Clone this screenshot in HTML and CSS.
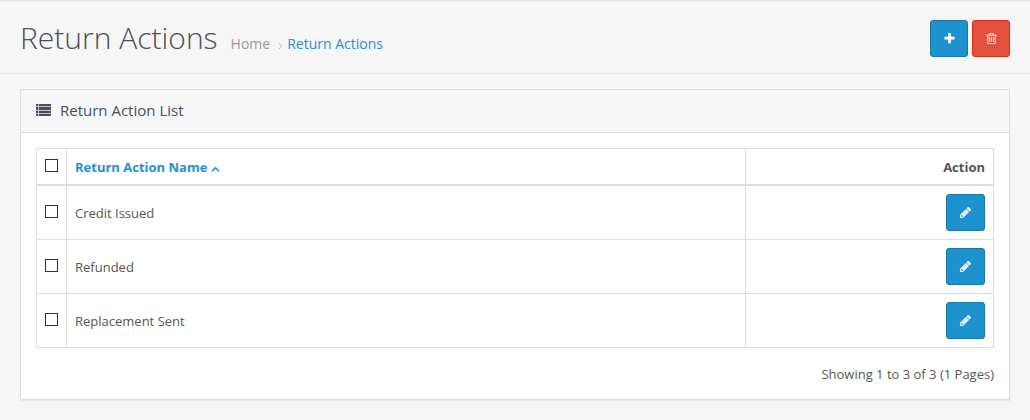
FILE: index.html
```html
<!DOCTYPE html>
<html lang="en">
<head>
<meta charset="utf-8">
<title>Return Actions</title>
<link rel="stylesheet" href="styles.css">
</head>
<body>
<svg class="sprite" aria-hidden="true">
  <symbol id="plus" viewBox="0 0 1792 1792"><path d="M1600 736v192q0 40-28 68t-68 28h-416v416q0 40-28 68t-68 28h-192q-40 0-68-28t-28-68v-416h-416q-40 0-68-28t-28-68v-192q0-40 28-68t68-28h416v-416q0-40 28-68t68-28h192q40 0 68 28t28 68v416h416q40 0 68 28t28 68z"/></symbol>
  <symbol id="trash" viewBox="0 0 1792 1792"><path d="M704 736v576q0 14-9 23t-23 9h-64q-14 0-23-9t-9-23v-576q0-14 9-23t23-9h64q14 0 23 9t9 23zm256 0v576q0 14-9 23t-23 9h-64q-14 0-23-9t-9-23v-576q0-14 9-23t23-9h64q14 0 23 9t9 23zm256 0v576q0 14-9 23t-23 9h-64q-14 0-23-9t-9-23v-576q0-14 9-23t23-9h64q14 0 23 9t9 23zm128 724v-948h-896v948q0 22 7 40.5t14.5 27 10.5 8.5h832q3 0 10.5-8.5t14.5-27 7-40.5zm-672-1076h448l-48-117q-7-9-17-11h-317q-10 2-17 11zm928 32v64q0 14-9 23t-23 9h-96v948q0 83-47 143.5t-113 60.5h-832q-66 0-113-58.5t-47-141.5v-952h-96q-14 0-23-9t-9-23v-64q0-14 9-23t23-9h309l70-167q15-37 54-63t79-26h320q40 0 79 26t54 63l70 167h309q14 0 23 9t9 23z"/></symbol>
  <symbol id="pencil" viewBox="0 0 1792 1792"><path d="M491 1536l91-91-235-235-91 91v107h128v128h107zm523-928q0-22-22-22-10 0-17 7l-542 542q-7 7-7 17 0 22 22 22 10 0 17-7l542-542q7-7 7-17zm-54-192l416 416-832 832h-416v-416zm683 96q0 53-37 90l-166 166-416-416 166-165q36-38 90-38 53 0 91 38l235 234q37 39 37 91z"/></symbol>
</svg>
<header class="page-header">
  <h1 class="page-title">Return Actions</h1>
  <nav class="breadcrumb" aria-label="Breadcrumb">
    <a class="crumb" href="#">Home</a>
    <svg class="crumb-sep" viewBox="0 0 5 8" aria-hidden="true"><path d="M1 2l3 3-3 3"/></svg>
    <a class="crumb crumb-active" href="#">Return Actions</a>
  </nav>
  <div class="toolbar">
    <button class="btn btn-primary" type="button" aria-label="Add New"><svg class="icon"><use href="#plus"/></svg></button>
    <button class="btn btn-danger" type="button" aria-label="Delete"><svg class="icon"><use href="#trash"/></svg></button>
  </div>
</header>
<main class="panel">
  <div class="panel-heading">
    <svg class="list-icon" viewBox="0 0 15 12" aria-hidden="true"><path d="M0 0h2v2H0zM3 0h12v2H3zM0 3h2v3H0zM3 3h12v3H3zM0 7h2v2H0zM3 7h12v2H3zM0 10h2v2H0zM3 10h12v2H3z"/><path class="list-soft" d="M0 0h15v12H0z"/></svg>
    <h2 class="panel-title">Return Action List</h2>
  </div>
  <div class="panel-body">
    <table class="table">
      <thead>
        <tr>
          <th class="col-check"><input class="check" type="checkbox" aria-label="Select all"></th>
          <th class="col-name"><a class="sort" href="#">Return Action Name<svg class="caret" viewBox="0 0 9 6" aria-hidden="true"><path d="M1 5.300L4.500 1.800 8 5.300"/></svg></a></th>
          <th class="col-action">Action</th>
        </tr>
      </thead>
      <tbody>
        <tr>
          <td><input class="check" type="checkbox" aria-label="Select Credit Issued"></td>
          <td>Credit Issued</td>
          <td class="col-action"><button class="btn btn-primary btn-edit" type="button" aria-label="Edit Credit Issued"><svg class="icon"><use href="#pencil"/></svg></button></td>
        </tr>
        <tr>
          <td><input class="check" type="checkbox" aria-label="Select Refunded"></td>
          <td>Refunded</td>
          <td class="col-action"><button class="btn btn-primary btn-edit" type="button" aria-label="Edit Refunded"><svg class="icon"><use href="#pencil"/></svg></button></td>
        </tr>
        <tr>
          <td><input class="check" type="checkbox" aria-label="Select Replacement Sent"></td>
          <td>Replacement Sent</td>
          <td class="col-action"><button class="btn btn-primary btn-edit" type="button" aria-label="Edit Replacement Sent"><svg class="icon"><use href="#pencil"/></svg></button></td>
        </tr>
      </tbody>
    </table>
    <p class="results">Showing 1 to 3 of 3 (1 Pages)</p>
  </div>
</main>
</body>
</html>
```

FILE: styles.css
```css
* { box-sizing: border-box; }
body {
  margin: 0;
  background: #f6f6f6;
  color: #4c4d5a;
  font: 13px/20px "Open Sans", "Noto Sans", sans-serif;
}
a { color: #1e91cf; text-decoration: none; }
.sprite { display: none; }
.page-header {
  display: flex;
  align-items: baseline;
  padding: 18px 20px 16px;
  border-top: 1px solid #e7e7e7;
  border-bottom: 1px solid #e7e7e7;
  box-shadow: inset 0 1px 0 #f0f0f0;
}
.page-title {
  margin: 0 13px 0 0;
  font-size: 30px;
  font-weight: 300;
  line-height: 38px;
}
.breadcrumb { display: flex; align-items: baseline; font-size: 14px; }
.breadcrumb .crumb { color: #999; }
.breadcrumb .crumb-active { color: #1e91cf; }
.crumb-sep {
  width: 5px;
  height: 8px;
  margin: 0 4px 0 8px;
  fill: none;
  stroke: #bbb;
}
.toolbar { display: flex; gap: 4px; align-self: flex-start; margin: 1px 0 0 auto; }
.btn {
  display: inline-flex;
  align-items: center;
  justify-content: center;
  width: 38px;
  height: 37px;
  padding: 0;
  border: 1px solid;
  border-radius: 3px;
  color: #fff;
  vertical-align: top;
}
.btn-primary { background: #1e91cf; border-color: #1978ab; }
.btn-danger { background: #e3503e; border-color: #dd2f1f; }
.btn-edit { width: 39px; }
.icon { width: 13px; height: 13px; fill: currentColor; }
.panel {
  margin: 15px 20px 20px;
  background: #fff;
  border: 1px solid #dcdcdc;
  box-shadow: 0 1px 1px rgba(0, 0, 0, 0.05);
}
.panel-heading {
  display: flex;
  align-items: center;
  gap: 9px;
  padding: 10px 15px 12px;
  background: #f6f6f6;
  border-bottom: 1px solid #dcdcdc;
}
.list-icon { width: 15px; height: 12px; fill: #4c4d5a; }
.list-soft { opacity: 0.3; }
.panel-title { margin: 0; font-size: 15px; font-weight: 400; line-height: 20px; }
.panel-body { padding: 15px; }
.table {
  width: 100%;
  table-layout: fixed;
  border-collapse: collapse;
  color: #555;
}
.table th, .table td {
  padding: 8px;
  border: 1px solid #ddd;
  text-align: left;
  vertical-align: middle;
}
.table thead th { padding-bottom: 7px; border-bottom-width: 2px; }
.table .col-check { width: 30px; }
.table .col-action { width: 248px; text-align: right; }
.check {
  appearance: none;
  display: block;
  width: 13px;
  height: 13px;
  margin: 0 0 3px;
  border: 1px solid #333;
  background: #fff;
}
.check:checked { background: #1e91cf; }
.caret {
  width: 9px;
  height: 6px;
  margin-left: 4px;
  fill: none;
  stroke: currentColor;
  stroke-width: 1.6;
}
.results { margin: 16px 0 0; text-align: right; color: #555; }
```
